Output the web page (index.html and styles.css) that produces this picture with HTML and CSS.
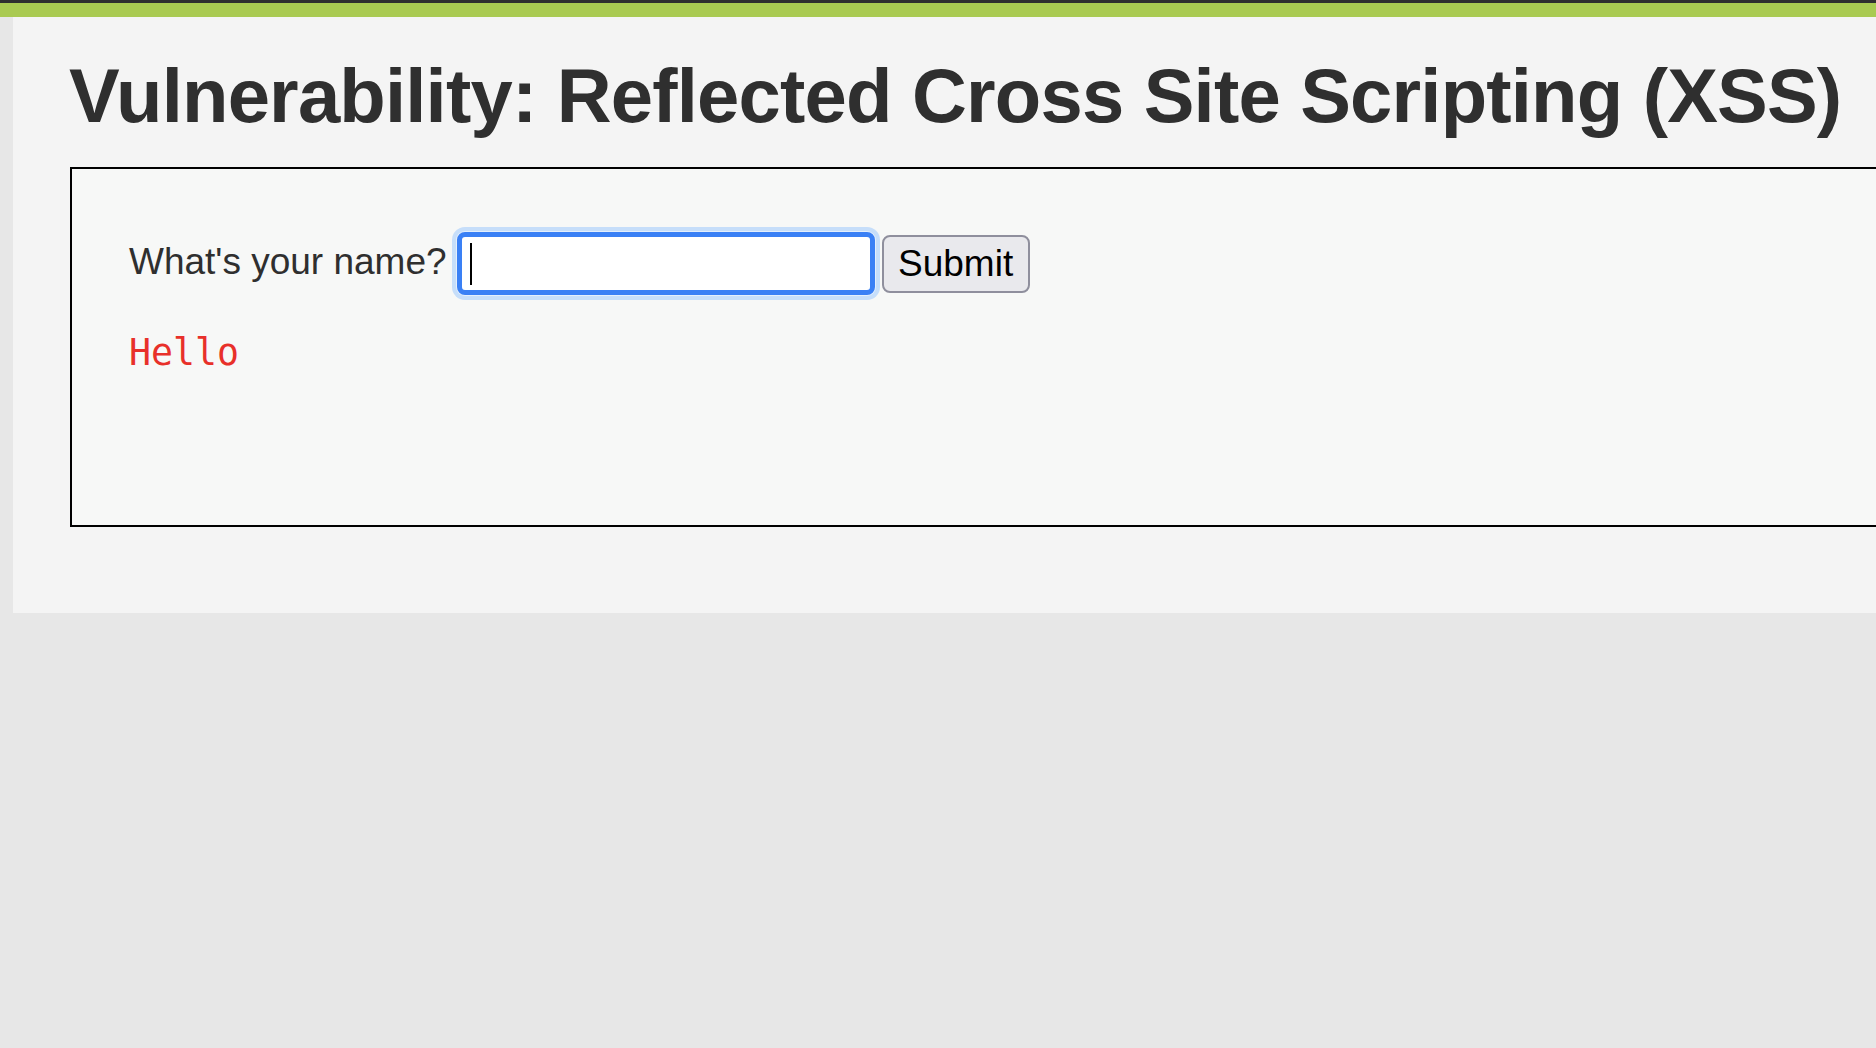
FILE: index.html
```html
<!DOCTYPE html>
<html lang="en">
<head>
<meta charset="utf-8">
<title>Vulnerability: Reflected Cross Site Scripting (XSS)</title>
<link rel="stylesheet" href="styles.css">
</head>
<body>
<div class="topbar"></div>
<div class="greenbar"></div>
<div class="main">
  <h1 class="title">Vulnerability: Reflected Cross Site Scripting (XSS)</h1>
  <div class="vulnerable-box">
    <form class="name-form" onsubmit="return false;">
      <label class="name-label" for="name">What's your name?</label>
      <span class="input-wrap">
        <input class="name-input" id="name" type="text" name="name">
        <span class="caret"></span>
      </span>
      <button class="submit-btn" type="submit">Submit</button>
    </form>
    <pre class="output">Hello</pre>
  </div>
</div>
</body>
</html>
```

FILE: styles.css
```css
html, body {
  margin: 0;
  padding: 0;
}
body {
  background: #e7e7e7;
  font-family: "Liberation Sans", Arial, sans-serif;
  color: #2f2f2f;
  overflow: hidden;
  height: 1048px;
}
.topbar {
  height: 3px;
  background: #2f2f2f;
}
.greenbar {
  height: 14px;
  background: #a9ca51;
}
.main {
  margin-left: 13px;
  background: #f4f4f4;
  height: 596px;
  padding: 34px 0 0 57px;
  box-sizing: border-box;
  overflow: hidden;
}
.title {
  margin: 0;
  font-size: 76px;
  line-height: 90px;
  font-weight: bold;
  letter-spacing: -0.8px;
  color: #2f2f2f;
  white-space: nowrap;
  margin-left: -1px;
}
.vulnerable-box {
  margin-top: 26px;
  width: 1900px;
  height: 360px;
  box-sizing: border-box;
  border: 2px solid #000;
  background: #f7f8f7;
  padding: 63px 0 0 57px;
}
.name-form {
  display: flex;
  align-items: center;
  margin: 0;
}
.name-label {
  font-size: 37px;
  line-height: 42px;
  color: #2f2f2f;
  margin-bottom: 4px;
}
.input-wrap {
  position: relative;
  margin-left: 10px;
  display: block;
}
.name-input {
  display: block;
  width: 418px;
  height: 63px;
  box-sizing: border-box;
  border: 5px solid #3a80f5;
  border-radius: 8px;
  background: #fff;
  outline: none;
  box-shadow: 0 0 0 1px #e4effc, 0 0 0 5px #c6defa;
  font-size: 37px;
  font-family: "Liberation Sans", Arial, sans-serif;
  caret-color: transparent;
  padding: 0 8px;
}
.caret {
  position: absolute;
  left: 13px;
  top: 11px;
  width: 2px;
  height: 42px;
  background: #000;
}
.submit-btn {
  margin-left: 7px;
  width: 148px;
  height: 58px;
  box-sizing: border-box;
  background: #e9e9ed;
  border: 2px solid #8f8f9d;
  border-radius: 8px;
  font-family: "Liberation Sans", Arial, sans-serif;
  font-size: 37px;
  color: #000;
  padding: 0;
  line-height: 54px;
}
.output {
  margin: 37px 0 0 0;
  font-family: "DejaVu Sans Mono", monospace;
  font-size: 36.5px;
  line-height: 42px;
  color: #e8302a;
}
```
